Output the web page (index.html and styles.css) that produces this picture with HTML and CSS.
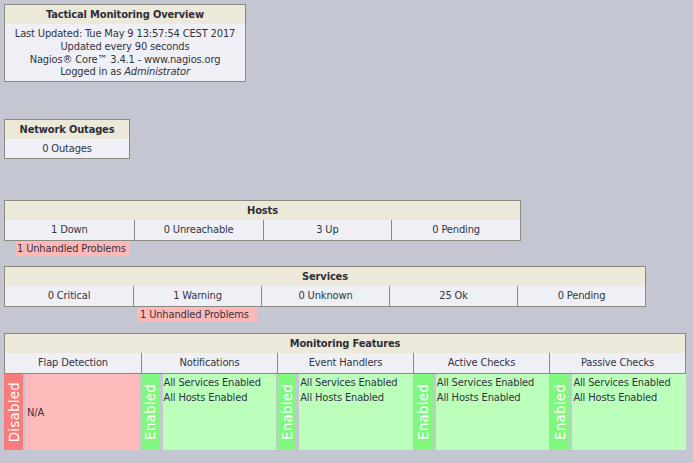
FILE: index.html
```html
<!DOCTYPE html>
<html>
<head>
<meta charset="utf-8">
<link rel="stylesheet" href="styles.css">
</head>
<body>
<div class="page">
  <div class="box overview">
    <div class="box-head">Tactical Monitoring Overview</div>
    <div class="box-body info">
      <div>Last Updated: Tue May 9 13:57:54 CEST 2017</div>
      <div>Updated every 90 seconds</div>
      <div>Nagios® Core™ 3.4.1 - www.nagios.org</div>
      <div>Logged in as <i>Administrator</i></div>
    </div>
  </div>

  <div class="box outages">
    <div class="box-head">Network Outages</div>
    <div class="box-body cell">0 Outages</div>
  </div>

  <div class="box hosts">
    <div class="box-head">Hosts</div>
    <div class="row cols4">
      <div class="cell">1 Down</div>
      <div class="cell">0 Unreachable</div>
      <div class="cell">3 Up</div>
      <div class="cell">0 Pending</div>
    </div>
  </div>
  <div class="problems-row hosts-problems">
    <span class="problem">1 Unhandled Problems</span>
  </div>

  <div class="box services">
    <div class="box-head">Services</div>
    <div class="row cols5">
      <div class="cell">0 Critical</div>
      <div class="cell">1 Warning</div>
      <div class="cell">0 Unknown</div>
      <div class="cell">25 Ok</div>
      <div class="cell">0 Pending</div>
    </div>
  </div>
  <div class="problems-row services-problems">
    <span class="problem">1 Unhandled Problems</span>
  </div>

  <div class="features">
    <div class="box-head feat-head">Monitoring Features</div>
    <div class="row cols5 feat-sub">
      <div class="cell">Flap Detection</div>
      <div class="cell">Notifications</div>
      <div class="cell">Event Handlers</div>
      <div class="cell">Active Checks</div>
      <div class="cell">Passive Checks</div>
    </div>
    <div class="feat-body">
      <div class="feat">
        <div class="strip off"><span>Disabled</span></div>
        <div class="feat-text off-text center">N/A</div>
      </div>
      <div class="feat">
        <div class="strip on"><span>Enabled</span></div>
        <div class="feat-text on-text">All Services Enabled<br>All Hosts Enabled</div>
      </div>
      <div class="feat">
        <div class="strip on"><span>Enabled</span></div>
        <div class="feat-text on-text">All Services Enabled<br>All Hosts Enabled</div>
      </div>
      <div class="feat">
        <div class="strip on"><span>Enabled</span></div>
        <div class="feat-text on-text">All Services Enabled<br>All Hosts Enabled</div>
      </div>
      <div class="feat">
        <div class="strip on"><span>Enabled</span></div>
        <div class="feat-text on-text">All Services Enabled<br>All Hosts Enabled</div>
      </div>
    </div>
  </div>
</div>
</body>
</html>
```

FILE: styles.css
```css
html, body {
  margin: 0;
  padding: 0;
  background: #c4c6d2;
}
body {
  font-family: "DejaVu Sans Condensed", "DejaVu Sans", sans-serif;
  font-size: 11px;
  letter-spacing: -0.15px;
  color: #333340;
}
.page {
  padding: 4px;
  display: flex;
  flex-direction: column;
  align-items: flex-start;
}
.box {
  border: 1px solid #8a8a80;
  box-sizing: border-box;
  background: #eff0f5;
}
.box-head {
  background: #ece9da;
  font-weight: bold;
  text-align: center;
  height: 19px;
  line-height: 19px;
  color: #2e2e38;
}
.overview { width: 242px; }
.info {
  text-align: center;
  padding: 4px 0 2px;
  line-height: 12.75px;
}
.outages {
  width: 126px;
  margin-top: 37px;
}
.cell {
  text-align: center;
  height: 19px;
  line-height: 19px;
}
.row {
  display: grid;
}
.row .cell {
  height: 20px;
  line-height: 20px;
  border-left: 1px solid #8a8a80;
}
.row .cell:first-child { border-left: none; }
.cols4 { grid-template-columns: repeat(4, 1fr); }
.cols5 { grid-template-columns: repeat(5, 1fr); }
.hosts {
  width: 517px;
  margin-top: 41px;
}
.services {
  width: 642px;
  margin-top: 10px;
}
.problems-row {
  height: 15px;
  display: flex;
}
.problem {
  background: #ffb8b8;
  line-height: 15px;
  height: 15px;
  white-space: nowrap;
}
.hosts-problems { padding-left: 12px; }
.hosts-problems .problem { padding: 0 4px 0 1px; }
.services-problems { padding-left: 133px; }
.services-problems .problem { padding: 0 8px 0 3px; }
.features {
  width: 682px;
  margin-top: 11px;
  box-sizing: border-box;
}
.feat-head {
  border: 1px solid #8a8a80;
  border-bottom: none;
}
.feat-sub {
  background: #eff0f5;
  border: 1px solid #8a8a80;
  border-top: none;
}
.feat-body {
  display: grid;
  grid-template-columns: repeat(5, 1fr);
  column-gap: 1px;
  height: 76px;
}
.feat {
  display: flex;
  gap: 3px;
}
.strip {
  width: 19px;
  flex: none;
  display: flex;
  align-items: center;
  justify-content: center;
  color: #ffffff;
  font-family: "DejaVu Sans", sans-serif;
  font-size: 13.5px;
  letter-spacing: 0.2px;
}
.strip span {
  writing-mode: vertical-rl;
  transform: rotate(180deg);
  white-space: nowrap;
}
.strip.off { background: #f87c7c; }
.strip.on { background: #80f880; }
.feat-text {
  flex: 1;
  padding: 1px 1px;
  line-height: 15px;
}
.off-text { background: #ffbbbb; }
.on-text { background: #bbffbb; }
.center {
  display: flex;
  align-items: center;
  padding: 0 1px;
}
```
